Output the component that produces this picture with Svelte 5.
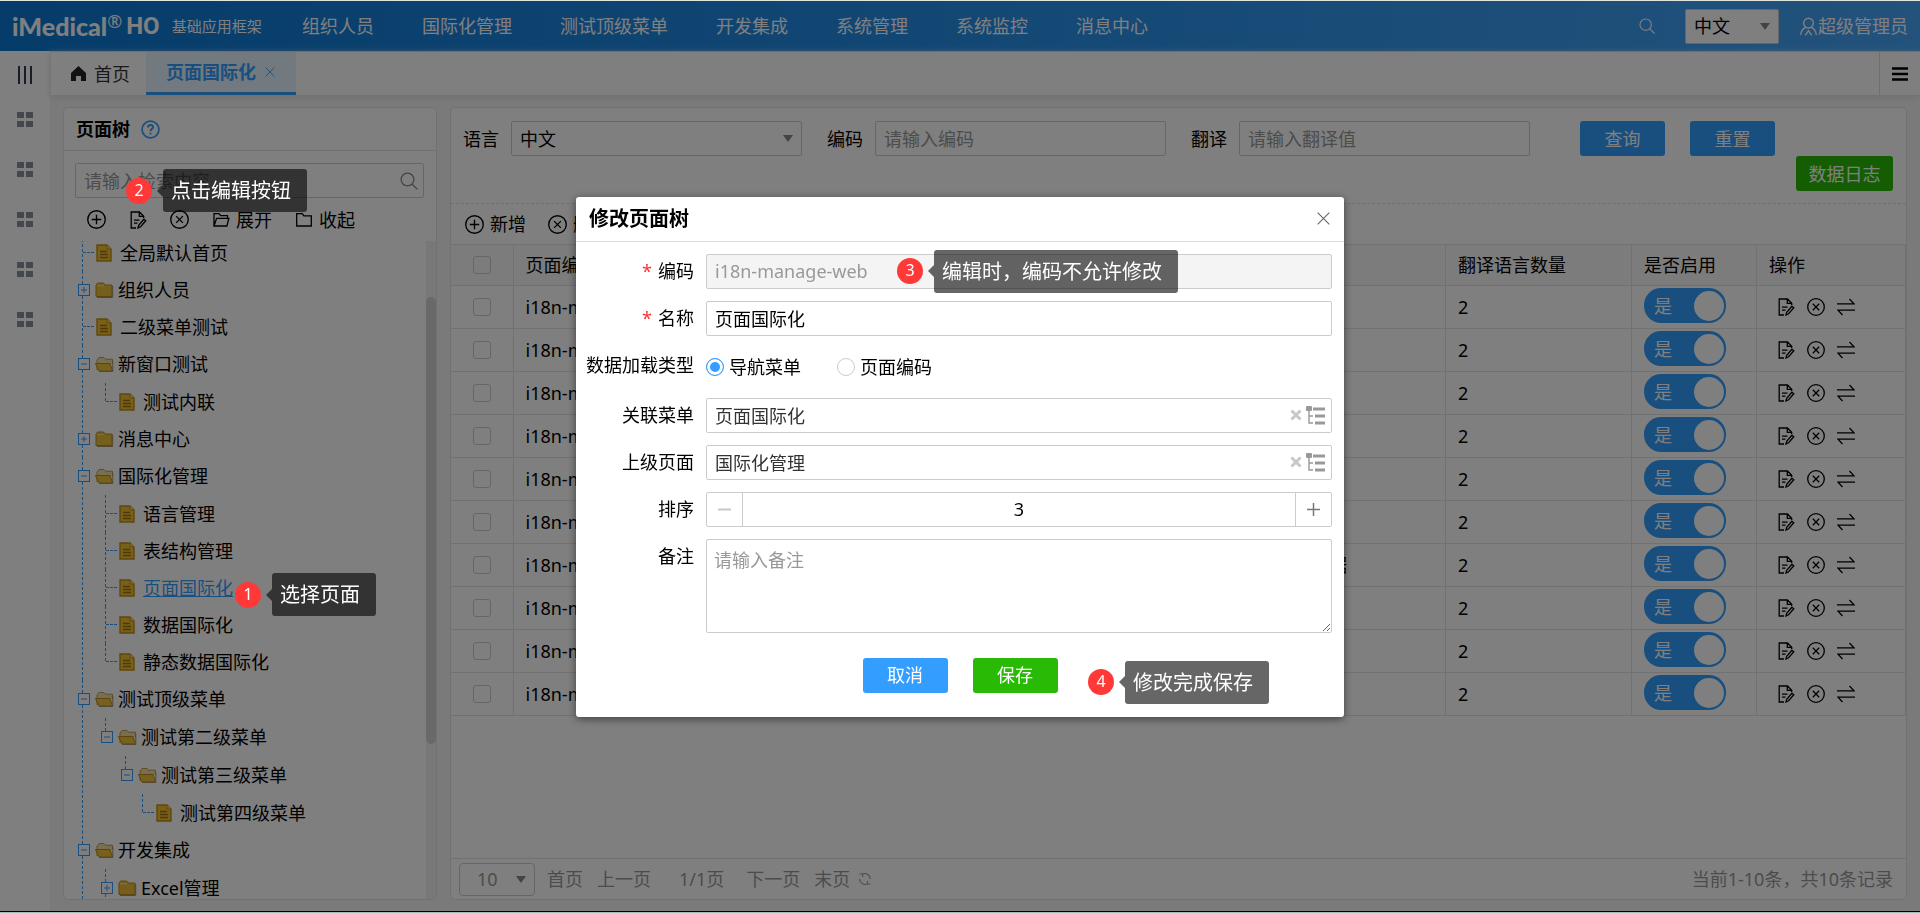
<script>
	let keyword = $state('')
	let lang = $state('中文')
	let queryLang = $state('中文')
	let pageSize = $state('10')
	let loadType = $state('menu')
	let order = $state(3)
	let selected = $state('页面国际化')

	const menus = ['组织人员', '国际化管理', '测试顶级菜单', '开发集成', '系统管理', '系统监控', '消息中心']

	const shortcuts = [1, 2, 3, 4, 5]

	const tree = [
		{ text: '全局默认首页' },
		{ text: '组织人员', closed: true },
		{ text: '二级菜单测试' },
		{ text: '新窗口测试', children: [{ text: '测试内联' }] },
		{ text: '消息中心', closed: true },
		{
			text: '国际化管理',
			children: [
				{ text: '语言管理' },
				{ text: '表结构管理' },
				{ text: '页面国际化' },
				{ text: '数据国际化' },
				{ text: '静态数据国际化' },
			],
		},
		{
			text: '测试顶级菜单',
			children: [
				{
					text: '测试第二级菜单',
					children: [{ text: '测试第三级菜单', children: [{ text: '测试第四级菜单' }] }],
				},
			],
		},
		{ text: '开发集成', more: true, children: [{ text: 'Excel管理', closed: true, more: true }] },
	]

	const rows = [
		{ name: '新增', value: '新增' },
		{ name: '修改', value: '修改' },
		{ name: '删除', value: '删除' },
		{ name: '查询', value: '查询' },
		{ name: '重置', value: '重置' },
		{ name: '保存', value: '保存' },
		{ name: '导出', value: '静态数据国际化导出数据' },
		{ name: '取消', value: '取消' },
		{ name: '编码', value: '编码' },
		{ name: '翻译', value: '翻译' },
	].map(row => ({ ...row, page: 'i18n-manage-web', count: 2, active: true }))
</script>

{#snippet icon(name, size = 18)}
	<svg class="icon" width={size} height={size} viewBox="0 0 18 18" aria-hidden="true">
		{#if name === 'add'}
			<circle cx="9" cy="9" r="8.3" />
			<path d="M9 4.5v9M4.5 9h9" />
		{:else if name === 'remove'}
			<circle cx="9" cy="9" r="8.3" />
			<path d="M5.8 5.8l6.4 6.4M12.2 5.8l-6.4 6.4" />
		{:else if name === 'edit'}
			<path d="M7 17H2.2V1h8.3l4.2 4.2V7M10.3 1v4.4h4.4M5 9.2h5.5M5 12.2h3.5" />
			<path d="M9 17l.7-2.8 5.2-6 1.9 1.6-5.2 6z" />
		{:else if name === 'swap'}
			<path d="M0 5.8h17L12.5 1M18 12.2H1L5.5 17" />
		{:else if name === 'folder-open'}
			<path d="M2 15V2.7h5l1.6 2h6.9v2.6M2 15l2.6-7.7h12.2L14.9 15z" />
		{:else if name === 'folder'}
			<path d="M1.7 15V2.7h5.6l1.6 2.2h7.4V15z" />
		{:else if name === 'search'}
			<circle cx="7.5" cy="7.5" r="6.4" />
			<path d="M12.2 12.2l5.2 5.2" />
		{:else if name === 'user'}
			<circle cx="9" cy="5.8" r="4.6" />
			<path d="M6.3 9.8C3.6 11 1.8 13.8 1.6 17.2M11.7 9.8c2.7 1.2 4.5 4 4.7 7.4M6 17.5L9 13l3 4.5" />
		{:else if name === 'refresh'}
			<path d="M5 3.2A7 7 0 0 1 15.8 9M13 14.8A7 7 0 0 1 2.2 9M2 2.5h4v4M16 15.5h-4v-4" />
		{:else if name === 'close'}
			<path d="M2 2l14 14M16 2L2 16" />
		{:else if name === 'help'}
			<circle cx="9" cy="9" r="8" stroke-width="1.6" />
			<path d="M6.6 7.2c0-3.4 5-3.2 4.8-.2-.1 1.6-2.4 1.7-2.4 3.6M9 12v1.8" stroke-width="1.8" />
		{/if}
	</svg>
{/snippet}

{#snippet fileIcon()}
	<svg width="16" height="18" viewBox="0 0 16 18" aria-hidden="true">
		<path d="M1 1h10l4 4v12H1z" fill="#f0c030" stroke="#c28e14" stroke-width="1.4" />
		<path d="M11 1v4h4" fill="#f8dc80" stroke="#c28e14" />
		<path d="M4 7.5h7M4 10.5h8M4 13.5h8" stroke="#9c7210" stroke-width="1.3" />
	</svg>
{/snippet}

{#snippet folderIcon(open)}
	<svg width="19" height="18" viewBox="0 0 19 18" aria-hidden="true">
		{#if open}
			<path d="M2 15V5l2-2.5h5l1.5 1.7h7V9" fill="#f0dca0" stroke="#c29a50" />
			<path d="M.5 8.5h14.5l2.5 7.5H4z" fill="#eec23a" stroke="#b88a20" />
			<path d="M4 16.5h13.8V6" fill="none" stroke="#a89468" />
		{:else}
			<path d="M1 15.5V4.5L2.5 2h6l1.7 2H17v11.5z" fill="#edbf38" stroke="#b88a20" />
			<path d="M2 4.7h7" stroke="#f8e2a0" />
			<path d="M2 16.5h15.7V5" fill="none" stroke="#a89468" />
		{/if}
	</svg>
{/snippet}

{#snippet branch(nodes)}
	<ul>
		{#each nodes as node}
			<li class:more={node.more}>
				<div class="node">
					{#if node.children || node.closed}
						<svg class="toggle" width="12" height="12" viewBox="0 0 12 12" aria-hidden="true">
							<rect x=".5" y=".5" width="11" height="11" />
							<path d={node.closed ? 'M3 6h6M6 3v6' : 'M3 6h6'} />
						</svg>
						{@render folderIcon(!node.closed)}
					{:else}
						<span class="twig"></span>
						{@render fileIcon()}
					{/if}
					<a
						href="#tree"
						class:leaf={!node.children && !node.closed}
						class:current={node.text === selected}
						onclick={() => (selected = node.text)}>{node.text}</a
					>
				</div>
				{#if node.children}
					{@render branch(node.children)}
				{/if}
			</li>
		{/each}
	</ul>
{/snippet}

{#snippet marker(n, text)}
	<span class="badge">{n}</span>
	<span class="tip">{text}</span>
{/snippet}

<div class="app">
	<header class="topbar">
		<div class="brand">
			<span class="logo">iMedical</span><sup>®</sup><span class="product">HO</span>
			<span class="slogan">基础应用框架</span>
		</div>
		<nav>
			{#each menus as menu}
				<a href="#menu">{menu}</a>
			{/each}
		</nav>
		<button class="plain" aria-label="搜索">{@render icon('search', 16)}</button>
		<span class="select lang">
			<select bind:value={lang} aria-label="语言切换"><option>中文</option></select>
		</span>
		<a class="user" href="#user">{@render icon('user', 19)}超级管理员</a>
	</header>

	<div class="body">
		<aside class="rail">
			<button class="plain unfold" aria-label="展开菜单">
				<svg width="16" height="18" viewBox="0 0 16 18"><path d="M2 0v18M8 0v18M14 0v18" stroke="#333b50" stroke-width="2" /></svg>
			</button>
			{#each shortcuts as n}
				<button class="plain" aria-label="快捷菜单{n}">
					<svg width="16" height="16" viewBox="0 0 16 16" fill="#8b8f9c"><path d="M0 0h7v6H0zM9 0h7v6H9zM0 9h7v6H0zM9 9h7v6H9z" /></svg>
				</button>
			{/each}
		</aside>

		<div class="main">
			<div class="tabs">
				<a class="tab" href="#home">
					<svg width="15" height="15" viewBox="0 0 15 15" aria-hidden="true"><path d="M7.500 0L15 7v8h-5v-5H5v5H0V7z" fill="#222" /></svg>
					首页
				</a>
				<a class="tab active" href="#page">页面国际化 {@render icon('close', 12)}</a>
				<button class="plain burger" aria-label="标签菜单">
					<svg width="16" height="14" viewBox="0 0 16 14"><path d="M0 1.500h16M0 7h16M0 12.500h16" stroke="#000" stroke-width="2.500" /></svg>
				</button>
			</div>

			<div class="columns">
				<section class="panel side">
					<h2>页面树 <span class="help">{@render icon('help', 19)}</span></h2>
					<div class="search">
						<input placeholder="请输入检索内容" aria-label="检索" bind:value={keyword} />
						<button class="plain" aria-label="检索">{@render icon('search')}</button>
					</div>
					<div class="tree-tools">
						<button class="plain" aria-label="新增">{@render icon('add', 19)}</button>
						<button class="plain" aria-label="编辑">{@render icon('edit')}</button>
						<button class="plain" aria-label="删除">{@render icon('remove', 19)}</button>
						<button class="plain">{@render icon('folder-open')}展开</button>
						<button class="plain">{@render icon('folder')}收起</button>
					</div>
					<div class="tree">
						{@render branch(tree)}
						<div class="scroll"><div class="thumb"></div></div>
					</div>
				</section>

				<section class="panel content">
					<form class="query">
						<label for="q-lang">语言</label>
						<span class="select">
							<select id="q-lang" bind:value={queryLang}><option>中文</option></select>
						</span>
						<label for="q-code">编码</label>
						<input id="q-code" placeholder="请输入编码" />
						<label for="q-value">翻译</label>
						<input id="q-value" placeholder="请输入翻译值" />
						<button type="button" class="btn find">查询</button>
						<button type="button" class="btn reset">重置</button>
						<button type="button" class="btn green log">数据日志</button>
					</form>

					<div class="tools">
						<button class="plain">{@render icon('add', 19)}新增</button>
						<button class="plain">{@render icon('remove', 19)}删除</button>
					</div>

					<table>
						<colgroup>
							<col class="c-check" />
							<col class="c-page" />
							<col />
							<col class="c-value" />
							<col class="c-count" />
							<col class="c-active" />
							<col class="c-ops" />
						</colgroup>
						<thead>
							<tr>
								<th class="center"><input type="checkbox" aria-label="全选" /></th>
								<th>页面编码</th>
								<th>编码</th>
								<th>翻译</th>
								<th>翻译语言数量</th>
								<th>是否启用</th>
								<th>操作</th>
							</tr>
						</thead>
						<tbody>
							{#each rows as row}
								<tr>
									<td class="center"><input type="checkbox" aria-label="选择" /></td>
									<td>{row.page}</td>
									<td>{row.name}</td>
									<td>{row.value}</td>
									<td>{row.count}</td>
									<td class="top">
										<label class="switch">
											是
											<input type="checkbox" bind:checked={row.active} />
										</label>
									</td>
									<td>
										<div class="ops">
											<button class="plain" aria-label="编辑">{@render icon('edit')}</button>
											<button class="plain" aria-label="删除">{@render icon('remove')}</button>
											<button class="plain" aria-label="转换">{@render icon('swap')}</button>
										</div>
									</td>
								</tr>
							{/each}
						</tbody>
					</table>

					<footer class="pager">
						<span class="select size">
							<select bind:value={pageSize} aria-label="每页条数"><option>10</option></select>
						</span>
						<button class="plain">首页</button>
						<button class="plain prev">上一页</button>
						<span>1/1页</span>
						<button class="plain next">下一页</button>
						<button class="plain">末页</button>
						<button class="plain reload" aria-label="刷新">{@render icon('refresh', 14)}</button>
						<span class="total">当前1-10条，共10条记录</span>
					</footer>
				</section>
			</div>
		</div>
	</div>
</div>

<div class="mask">
	<div class="dialog" role="dialog" aria-labelledby="dlg-title">
		<div class="dialog-head">
			<h3 id="dlg-title">修改页面树</h3>
			<button class="plain" aria-label="关闭">{@render icon('close', 15)}</button>
		</div>
		<form class="edit">
			<label for="f-code" class="required">编码</label>
			<input id="f-code" value="i18n-manage-web" disabled />

			<label for="f-name" class="required">名称</label>
			<input id="f-name" value="页面国际化" />

			<span class="caption">数据加载类型</span>
			<div class="radios">
				<label><input type="radio" name="load" value="menu" bind:group={loadType} />导航菜单</label>
				<label><input type="radio" name="load" value="code" bind:group={loadType} />页面编码</label>
			</div>

			{#each [['f-menu', '关联菜单', '页面国际化'], ['f-parent', '上级页面', '国际化管理']] as [id, label, value]}
				<label for={id}>{label}</label>
				<div class="combo">
					<input {id} {value} />
					<button type="button" class="plain" aria-label="清空">
						<svg width="12" height="12" viewBox="0 0 12 12"><path d="M1.500 1.500l9 9M10.500 1.500l-9 9" stroke="#c8c8c8" stroke-width="3" /></svg>
					</button>
					<button type="button" class="plain" aria-label="选择">
						<svg width="20" height="19" viewBox="0 0 20 19">
							<path d="M7 3h12M9 10h10M9 17h10" stroke="#999" stroke-width="3" />
							<path d="M3 5v12h4M3 10h4" fill="none" stroke="#999" stroke-width="1.400" />
							<rect x="0" y="0" width="6" height="5" rx="1" fill="#999" />
						</svg>
					</button>
				</div>
			{/each}

			<label for="f-order">排序</label>
			<div class="spinner">
				<button type="button" aria-label="减少" disabled={order <= 3} onclick={() => order--}>
					<svg width="13" height="13" viewBox="0 0 13 13"><path d="M0 6.500h13" stroke="#c8c8c8" stroke-width="2" /></svg>
				</button>
				<input id="f-order" bind:value={order} />
				<button type="button" aria-label="增加" onclick={() => order++}>
					<svg width="13" height="13" viewBox="0 0 13 13"><path d="M0 6.500h13M6.500 0v13" stroke="#777" stroke-width="1.500" /></svg>
				</button>
			</div>

			<label for="f-remark">备注</label>
			<textarea id="f-remark" placeholder="请输入备注"></textarea>
		</form>
		<div class="dialog-foot">
			<button class="btn">取消</button>
			<button class="btn green">保存</button>
		</div>
		<div class="marker m3">{@render marker(3, '编辑时，编码不允许修改')}</div>
		<div class="marker m4">{@render marker(4, '修改完成保存')}</div>
	</div>
	<div class="marker m1">{@render marker(1, '选择页面')}</div>
	<div class="marker m2">{@render marker(2, '点击编辑按钮')}</div>
</div>

<style>
	:global(body) {
		background: #fff;
	}

	.app,
	.mask {
		font: 18px/24px 'Noto Sans', 'Noto Sans CJK SC', sans-serif;
		color: #000;
	}

	.app *,
	.mask * {
		box-sizing: border-box;
	}

	.app {
		box-sizing: border-box;
		height: 100vh;
		display: flex;
		flex-direction: column;
		border-top: 1px solid #dfe6e0;
		border-bottom: 1px solid #a4bcbc;
		overflow: hidden;
	}

	a {
		color: inherit;
		text-decoration: none;
	}

	button,
	input,
	select,
	textarea {
		font: inherit;
		color: inherit;
		margin: 0;
	}

	input,
	select,
	textarea {
		height: 35px;
		padding: 0 8px;
		background: #fff;
		border: 1px solid #ccc;
		border-radius: 2px;
		min-width: 0;
	}

	::placeholder {
		color: #999;
		opacity: 1;
	}

	.plain {
		display: inline-flex;
		align-items: center;
		justify-content: center;
		gap: 6px;
		padding: 0;
		border: 0;
		background: none;
		white-space: nowrap;
	}

	.icon {
		flex: none;
		fill: none;
		stroke: currentColor;
		stroke-width: 1.3;
	}

	.btn {
		height: 35px;
		min-width: 85px;
		padding: 0 12px;
		border: 0;
		border-radius: 3px;
		background: #339eff;
		color: #fff;
	}

	.btn.green {
		background: #28ba05;
	}

	.select {
		display: grid;
		align-items: center;

		& select {
			grid-area: 1 / 1;
			width: 100%;
			appearance: none;
		}

		&::after {
			content: '';
			grid-area: 1 / 1;
			justify-self: end;
			margin-right: 9px;
			border: 5px solid transparent;
			border-top: 7px solid #888;
			border-bottom: 0;
			pointer-events: none;
		}
	}

	/* top bar */
	.topbar {
		flex: none;
		height: 50px;
		display: flex;
		align-items: center;
		padding: 0 12px;
		color: #fff;
		background: linear-gradient(90deg, #0c78d4, #2690ea 50%, #46a5f8);
	}

	.brand {
		display: flex;
		align-items: center;
		width: 290px;

		& .logo {
			font: 900 25px/30px Lato, sans-serif;
		}

		& sup {
			font-size: 18px;
			line-height: 20px;
			align-self: flex-start;
		}

		& .product {
			margin-left: 4px;
			font: 700 24px/30px Roboto, sans-serif;
		}

		& .slogan {
			margin-left: 12px;
			font-size: 15px;
		}
	}

	nav {
		flex: 1;
		display: flex;
		gap: 48px;
	}

	.lang {
		width: 94px;
		margin: 0 20px 0 30px;
		color: #000;
	}

	.user {
		display: flex;
		align-items: center;
	}

	.body {
		flex: 1;
		min-height: 0;
		display: flex;
		background: #f4f4f4;
		border-bottom: 1px solid #000;
	}

	.rail {
		width: 50px;
		flex: none;
		display: flex;
		flex-direction: column;
		align-items: stretch;
		background: #fff;

		& button {
			height: 50px;
		}

		& .unfold {
			height: 44px;
			padding-top: 4px;
		}
	}

	.main {
		flex: 1;
		min-width: 0;
		display: flex;
		flex-direction: column;
	}

	.tabs {
		flex: none;
		height: 44px;
		display: flex;
		background: #fff;
		border-top: 1px solid #ddd;
		border-left: 1px solid #eee;
		box-shadow: 0 2px 6px #ddd;
	}

	.tab {
		display: flex;
		align-items: center;
		gap: 8px;
		padding: 0 16px 0 20px;
		color: #333;

		&.active {
			gap: 8px;
			padding-right: 20px;
			font-weight: 700;
			color: #339eff;
			background: #e5f3ff;
			border-bottom: 3px solid #339eff;
		}
	}

	.burger {
		width: 41px;
		margin-left: auto;
		border-left: 1px solid #ddd;
	}

	.columns {
		flex: 1;
		min-height: 0;
		display: flex;
		gap: 13px;
		padding: 12px 13px 11px 13px;
	}

	.panel {
		display: flex;
		flex-direction: column;
		background: #fff;
		border: 1px solid #e2e2e2;
		border-radius: 5px;
		overflow: hidden;
	}

	/* page tree */
	.side {
		flex: none;
		width: 374px;
	}

	h2 {
		flex: none;
		display: flex;
		align-items: center;
		gap: 11px;
		height: 43px;
		margin: 0;
		padding: 0 12px;
		font-size: 18px;
		border-bottom: 1px solid #e2e2e2;
	}

	.help {
		display: flex;
		color: #339eff;
	}

	.search {
		display: flex;
		margin: 12px 12px 0 11px;
		padding-right: 5px;
		border: 1px solid #ccc;
		border-radius: 2px;
		color: #888;

		& input {
			flex: 1;
			height: 33px;
			border: 0;
		}
	}

	.tree-tools {
		flex: none;
		height: 43px;
		display: flex;
		align-items: center;
		gap: 23px;
		padding: 0 23px;
	}

	.tree {
		flex: 1;
		min-height: 0;
		display: flex;
		overflow: hidden;

		& ul {
			margin: 0;
			padding: 0;
			list-style: none;
		}

		& > ul {
			flex: 1;
			margin-top: -7px;
			padding-left: 12px;
		}

		& li {
			background: repeating-linear-gradient(#339eff 0 3px, transparent 3px 5px) 6px 0 / 1px 100% no-repeat;
		}

		& li:last-child:not(.more) {
			background-size: 1px 19px;
		}

		& li > ul {
			padding: 1px 0 0 23px;
		}

		& li li > ul {
			padding-left: 20px;
		}

		& li li li > ul {
			padding-left: 17px;
		}
	}

	.node {
		height: 37px;
		display: flex;
		align-items: center;
		padding-left: 2px;

		& svg {
			flex: none;
		}

		& a {
			margin-left: 4px;
			white-space: nowrap;
		}

		& a.leaf {
			margin-left: 8px;
		}

		& a.current {
			color: #339eff;
			text-decoration: underline;
		}
	}

	.toggle {
		margin-right: 5px;
		fill: #fff;
		stroke: #339eff;
	}

	.twig {
		width: 11px;
		margin: 0 2px 0 5px;
		border-top: 1px dashed #339eff;
	}

	.scroll {
		width: 10px;
		padding-top: 56px;
		background: #f1f1f1;
	}

	.thumb {
		height: 447px;
		border-radius: 5px;
		background: #d2d2d2;
	}

	/* query and grid */
	.content {
		flex: 1;
		min-width: 0;
	}

	.query {
		flex: none;
		display: flex;
		flex-wrap: wrap;
		align-items: center;
		padding: 13px 13px 12px 12px;
		border-bottom: 1px dashed #ddd;

		& > .select,
		& > input {
			width: 291px;
			margin: 0 25px 0 12px;
		}

		& .find {
			margin: 0 25px;
		}

		& .reset {
			margin-right: 30px;
		}

		& .log {
			margin-left: auto;
			min-width: 97px;
		}
	}

	.tools {
		flex: none;
		height: 40px;
		display: flex;
		align-items: center;
		gap: 22px;
		padding: 0 14px;
	}

	table {
		width: 100%;
		table-layout: fixed;
		border-collapse: collapse;
	}

	.c-check {
		width: 62px;
	}

	.c-page {
		width: 300px;
	}

	.c-value {
		width: 309px;
	}

	.c-count {
		width: 186px;
	}

	.c-active {
		width: 125px;
	}

	.c-ops {
		width: 149px;
	}

	th,
	td {
		height: 43px;
		padding: 0 12px;
		border: 1px solid #e2e2e2;
		border-left: 0;
		text-align: left;
		font-weight: inherit;
		white-space: nowrap;
	}

	th {
		height: 41px;
		background: #f9f9f9;
	}

	.center {
		text-align: center;
	}

	.top {
		vertical-align: top;
		padding-top: 2px;
	}

	th input,
	td.center input {
		appearance: none;
		display: block;
		width: 18px;
		height: 18px;
		margin: 0 auto;
		padding: 0;
		border-radius: 3px;
		background: none;
	}

	.switch {
		display: flex;
		align-items: center;
		justify-content: space-between;
		width: 82px;
		height: 35px;
		padding: 0 2px 0 10px;
		border-radius: 17px;
		background: #339eff;
		color: #fff;

		& input {
			appearance: none;
			width: 30px;
			height: 30px;
			padding: 0;
			border: 0;
			border-radius: 50%;
			background: #fff;
		}
	}

	.ops {
		display: flex;
		gap: 12px;
		padding-left: 8px;
	}

	.pager {
		flex: none;
		height: 41px;
		display: flex;
		align-items: center;
		gap: 14px;
		margin-top: auto;
		padding: 0 13px 0 8px;
		border-top: 1px solid #e2e2e2;
		color: #999;

		& .size {
			width: 76px;
			margin-right: -2px;
		}

		& select {
			height: 33px;
			padding-left: 17px;
			border-radius: 4px;
		}

		& .prev {
			margin-right: 14px;
		}

		& .next {
			margin-left: 8px;
		}

		& .reload {
			margin-left: -6px;
		}

		& .total {
			margin-left: auto;
		}
	}

	/* dialog */
	.mask {
		position: fixed;
		inset: 1px 0;
		display: flex;
		align-items: center;
		justify-content: center;
		background: rgba(0, 0, 0, 0.5);
	}

	.dialog {
		position: relative;
		width: 768px;
		background: #fff;
		border-radius: 3px;
		box-shadow: 0 2px 8px rgba(0, 0, 0, 0.5);
	}

	.dialog-head {
		height: 45px;
		display: flex;
		align-items: center;
		justify-content: space-between;
		padding: 0 13px;
		border-bottom: 1px solid #ddd;
		color: #666;
	}

	h3 {
		margin: 0;
		font-size: 20px;
		color: #000;
	}

	.edit {
		display: grid;
		grid-template-columns: 105px 1fr;
		gap: 12px;
		padding: 12px 12px 25px 13px;

		& > label,
		& > .caption {
			justify-self: end;
			line-height: 35px;
			white-space: nowrap;
		}

		& .required::before {
			content: '*';
			margin-right: 6px;
			color: #f33;
		}

		& input:disabled {
			background: #f4f4f4;
			color: #999;
		}

		& textarea {
			height: 94px;
			padding: 8px 7px;
		}
	}

	.radios {
		height: 38px;
		display: flex;
		align-items: center;
		gap: 36px;

		& label {
			display: flex;
			align-items: center;
			gap: 5px;
		}

		& input {
			appearance: none;
			width: 18px;
			height: 18px;
			padding: 0;
			border-radius: 50%;
		}

		& input:checked {
			border-color: #339eff;
			background: #339eff;
			box-shadow: inset 0 0 0 3px #fff;
		}
	}

	.combo {
		display: flex;
		align-items: center;
		gap: 4px;
		padding-right: 5px;
		border: 1px solid #ccc;
		border-radius: 2px;

		& input {
			flex: 1;
			height: 33px;
			border: 0;
			color: #333;
		}
	}

	.spinner {
		display: flex;
		border: 1px solid #ccc;
		border-radius: 2px;

		& input {
			flex: 1;
			height: 33px;
			border: 0;
			text-align: center;
		}

		& button {
			display: flex;
			align-items: center;
			justify-content: center;
			width: 36px;
			padding: 0;
			border: 0;
			background: none;
		}

		& button:first-child {
			border-right: 1px solid #ccc;
		}

		& button:last-child {
			border-left: 1px solid #ccc;
		}
	}

	.dialog-foot {
		display: flex;
		justify-content: center;
		gap: 25px;
		padding-bottom: 24px;
	}

	/* step markers */
	.marker {
		position: absolute;
		display: flex;
		align-items: center;
		gap: 11px;
		color: #fff;
	}

	.m1 {
		left: 235px;
		top: 572px;
	}

	.m2 {
		left: 126px;
		top: 168px;
	}

	.m3 {
		left: 321px;
		top: 53px;
	}

	.m4 {
		left: 512px;
		top: 464px;
	}

	.badge {
		width: 26px;
		height: 26px;
		border-radius: 50%;
		background: #ff3838;
		font-size: 16px;
		line-height: 25px;
		text-align: center;
	}

	.tip {
		display: flex;
		padding: 0 16px 0 8px;
		border-radius: 3px;
		background: rgba(0, 0, 0, 0.6);
		font-size: 20px;
		line-height: 43px;
		white-space: nowrap;

		&::before {
			content: '';
			align-self: center;
			margin-left: -14px;
			margin-right: 8px;
			border: 6px solid transparent;
			border-right-color: rgba(0, 0, 0, 0.6);
			border-left: 0;
		}
	}
</style>
